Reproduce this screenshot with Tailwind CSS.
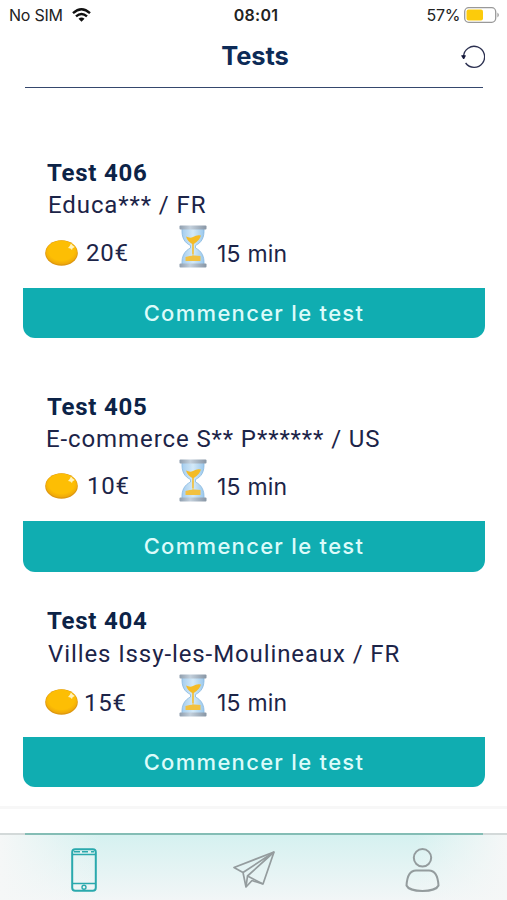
<!DOCTYPE html>
<html lang="fr">

<head>
  <meta charset="UTF-8" />
  <meta name="viewport" content="width=device-width, initial-scale=1.0" />
  <title>Tests</title>
  <script src="https://cdn.jsdelivr.net/npm/@tailwindcss/browser@4"></script>
</head>

<body class="bg-white">
  <!-- Shared icons -->
  <svg class="absolute w-0 h-0">
    <defs>
      <radialGradient id="gold" cx="50%" cy="42%" r="58%">
        <stop offset="0.7" stop-color="#fdbe04" />
        <stop offset="1" stop-color="#eda60a" />
      </radialGradient>
      <linearGradient id="glass" x1="0" x2="1">
        <stop offset="0" stop-color="#a5cdee" />
        <stop offset="0.5" stop-color="#d3e9f8" />
        <stop offset="1" stop-color="#9bc8ec" />
      </linearGradient>
      <linearGradient id="cap" x1="0" x2="1">
        <stop offset="0" stop-color="#8f9eae" />
        <stop offset="0.4" stop-color="#c3d0dc" />
        <stop offset="1" stop-color="#8795a4" />
      </linearGradient>
    </defs>
    <symbol id="coin" viewBox="0 0 33 26">
      <ellipse cx="16.5" cy="13" rx="16.3" ry="12.8" fill="#dd970f" />
      <ellipse cx="16.5" cy="12.6" rx="15.6" ry="12" fill="url(#gold)" />
      <path d="M26 3.5l1.6 2 2.2 1.6-2.2 1.1L27 10l-1.7-1.5L23 8l1.700-2z" fill="#fff3bd" />
    </symbol>
    <symbol id="hourglass" viewBox="0 0 28 43">
      <path d="M3 3.5H25C25.5 13 22.5 17.500 16.500 20.500V23C22.500 26 25.500 31 25 39.500H3C2.500 31 5.500 26 11.500 23V20.500C5.500 17.500 2.500 13 3 3.500Z" fill="url(#glass)" stroke="#86b7df" stroke-width="0.8" />
      <path d="M7 11.500Q11 13.500 14 12Q18 9.500 22 10.500Q20.500 15.500 14.800 19L14.500 29H13.400L13.200 19Q8.500 16.500 7 11.500Z" fill="#f4bb25" />
      <path d="M6.500 32Q13 29.500 21.500 31V36H6.500Z" fill="#f2c140" />
      <path d="M14 22V31" stroke="#f2c140" stroke-width="1" />
      <rect x="0.500" y="0.500" width="27" height="4" rx="1" fill="url(#cap)" />
      <rect x="0.500" y="38.500" width="27" height="4" rx="1" fill="url(#cap)" />
    </symbol>
  </svg>

  <div class="relative flex flex-col w-[507px] h-[900px] overflow-hidden text-[#1c2448] font-['Roboto',sans-serif]">
    <!-- Status bar -->
    <div class="grid grid-cols-3 items-center h-[30px] shrink-0 pl-[9px] pr-[7px] text-[#222] text-base font-['Inter',sans-serif]">
      <div class="flex items-center gap-[9px]">
        <span class="tracking-[-0.25px]">No SIM</span>
        <svg class="w-[19px] h-[14px]" viewBox="0 0 19 14" fill="none" stroke="#111" stroke-width="2.4">
          <path d="M1 5.200Q9.500-2.600 18 5.200" />
          <path d="M4 8.400Q9.500 3.400 15 8.400" />
          <path d="M9.500 13.800L6.500 10.800Q9.500 8.300 12.500 10.800Z" fill="#111" stroke="none" />
        </svg>
      </div>
      <div class="text-center font-semibold pl-[3px] tracking-[0.3px]">08:01</div>
      <div class="flex items-center justify-end gap-1">
        <span class="tracking-[-0.35px]">57%</span>
        <svg class="w-[36px] h-[16px]" viewBox="0 0 36 16">
          <rect x="0.7" y="0.7" width="31" height="14.600" rx="4" fill="#fff" stroke="#999" stroke-width="1.300" />
          <rect x="2.500" y="2.500" width="16.500" height="11" rx="2" fill="#fccb0b" />
          <path d="M33.500 5.500Q36 8 33.500 10.500Z" fill="#888" />
        </svg>
      </div>
    </div>

    <!-- Header -->
    <header class="flex items-center justify-between h-[58px] shrink-0 ml-[25px] mr-6 pb-1 border-b border-[#35476d]">
      <span class="w-6"></span>
      <h1 class="text-[25.500px] font-bold tracking-[-0.1px] text-[#0d2b57] font-['Inter',sans-serif]">Tests</h1>
      <svg class="w-6 h-6 mt-px -mr-[2px]" viewBox="0 0 24 24" fill="none" stroke="#2b3050" stroke-width="1.300">
        <path d="M2.600 11.500A10.500 10.500 0 1 1 4.600 18" />
        <path d="M0 10.500Q2.500 9.500 5 10.500L3.200 14H2.200Z" fill="#14183a" stroke="none" />
      </svg>
    </header>

    <!-- Test list -->
    <main class="flex flex-col pl-[23px] pr-[22px] pt-[69px]">
      <section class="h-[181px]">
        <h2 class="h-8 pl-6 text-[24px] leading-8 font-bold tracking-[0.75px] text-[#0c2347]">Test 406</h2>
        <p class="h-8 pl-[25px] text-[24px] leading-8 tracking-[0.9px]">Educa*** / FR</p>
        <div class="flex h-[67px] pl-[22px] pt-[4px]">
          <svg class="w-[33px] h-[26px] mt-[15px]"><use href="#coin" /></svg>
          <span class="w-[92px] pl-2 pt-[12px] text-[24px] leading-8 tracking-[0.8px]">20€</span>
          <svg class="w-[28px] h-[43px] ml-[9px]"><use href="#hourglass" /></svg>
          <span class="pl-[10px] pt-[13px] text-[23px] leading-8 tracking-[0.2px] font-['Inter',sans-serif]">15 min</span>
        </div>
        <button class="block w-full h-[50px] rounded-b-xl bg-[#10adb1] text-[#dcfbfa] text-[22px] font-medium tracking-[1.3px] font-['Inter',sans-serif]">Commencer le test</button>
      </section>

      <section class="h-[181px] mt-[53px]">
        <h2 class="h-8 pl-6 text-[24px] leading-8 font-bold tracking-[0.75px] text-[#0c2347]">Test 405</h2>
        <p class="h-8 pl-[23px] text-[24px] leading-8 tracking-[0.9px]">E-commerce S** P****** / US</p>
        <div class="flex h-[66px] pl-[22px] pt-[4px]">
          <svg class="w-[33px] h-[26px] mt-[14px]"><use href="#coin" /></svg>
          <span class="w-[92px] pl-[9px] pt-[11px] text-[24px] leading-8 tracking-[0.8px]">10€</span>
          <svg class="w-[28px] h-[43px] ml-[9px]"><use href="#hourglass" /></svg>
          <span class="pl-[10px] pt-[12px] text-[23px] leading-8 tracking-[0.2px] font-['Inter',sans-serif]">15 min</span>
        </div>
        <button class="block w-full h-[51px] rounded-b-xl bg-[#10adb1] text-[#dcfbfa] text-[22px] font-medium tracking-[1.3px] font-['Inter',sans-serif]">Commencer le test</button>
      </section>

      <section class="h-[182px] mt-[33px]">
        <h2 class="h-8 pl-6 text-[24px] leading-8 font-bold tracking-[0.75px] text-[#0c2347]">Test 404</h2>
        <p class="h-8 pl-[25px] pt-px text-[24px] leading-8 tracking-[0.9px]">Villes Issy-les-Moulineaux / FR</p>
        <div class="flex h-[68px] pl-[22px] pt-[5px]">
          <svg class="w-[33px] h-[26px] mt-[15px]"><use href="#coin" /></svg>
          <span class="w-[92px] pl-[6px] pt-[13px] text-[24px] leading-8 tracking-[0.8px]">15€</span>
          <svg class="w-[28px] h-[43px] ml-[9px]"><use href="#hourglass" /></svg>
          <span class="pl-[10px] pt-[13px] text-[23px] leading-8 tracking-[0.2px] font-['Inter',sans-serif]">15 min</span>
        </div>
        <button class="block w-full h-[50px] rounded-b-xl bg-[#10adb1] text-[#dcfbfa] text-[22px] font-medium tracking-[1.3px] font-['Inter',sans-serif]">Commencer le test</button>
      </section>
    </main>

    <!-- Bottom navigation -->
    <nav class="absolute inset-x-0 bottom-0">
      <div class="h-[3px] bg-[#f7f7f7]"></div>
      <div class="h-6"></div>
      <div class="h-[2px] bg-[#d3d9d9] pl-[25px] pr-[24px]">
        <div class="h-full bg-[#84bdb5]"></div>
      </div>
      <div class="bg-linear-to-b from-[#d5f1f0] to-[#f2f6f7]">
        <div class="grid grid-cols-3 h-[65px] pt-1 justify-items-center items-center bg-[linear-gradient(to_right,#f5f7f7,transparent_20%,transparent_82%,#f5f7f7)]">
          <svg class="w-[26px] h-[44px] -ml-[2px]" viewBox="0 0 26 44" fill="none" stroke="#2aa9ad" stroke-width="2">
            <rect x="1.200" y="1.200" width="23.600" height="41.600" rx="3" />
            <path d="M1 6.500H25M1 35.500H25" stroke-width="1.600" />
            <path d="M3 3.800H9M11 3.800H17M20 3.800H23" stroke-width="1.500" />
            <circle cx="13" cy="39.300" r="2" stroke-width="1.400" />
          </svg>
          <svg class="w-[42px] h-[38px]" viewBox="0 0 42 38" fill="none" stroke="#949c9e" stroke-width="1.700" stroke-linejoin="round">
            <path d="M41 1L1 16.500L10 21.500L13 36L19 29.500L30 33Z" />
            <path d="M41 1L10 21.500M41 1L14.500 25L13 36M14.500 25L30 33" />
          </svg>
          <svg class="w-[35px] h-[44px]" viewBox="0 0 35 44" fill="none" stroke="#949c9e" stroke-width="2">
            <circle cx="17.500" cy="9.800" r="8.700" />
            <path d="M11 22.500H24C30 22.500 33 29 33.500 37.500C32 41 25 43 17.500 43S3 41 1.500 37.500C2 29 5 22.500 11 22.500Z" />
          </svg>
        </div>
      </div>
    </nav>
  </div>
</body>

</html>
